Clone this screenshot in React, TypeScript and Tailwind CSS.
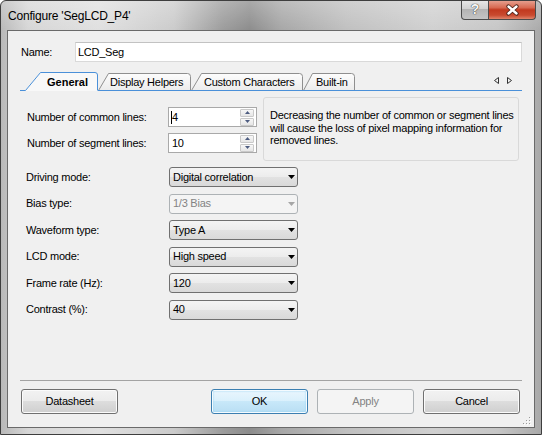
import React from "react";

const TAB_BLUE = "#4a90d9";

interface ITabProps {
  label: string;
  width: number;
  slant: number;
  idx: number;
  className: string;
  textClass: string;
}

// unselected tab with the slanted left edge
const Tab = ({ label, width, slant, idx, className, textClass }: ITabProps) => {
  const r = width - 0.5;
  const outline = `M0.5 18.5L${slant + 0.5} 1.5H${r - 3}Q${r} 1.5 ${r} 4.5V18.5`;
  const fill = `M0.5 19L${slant + 0.5} 1.5H${r - 3}Q${r} 1.5 ${r} 4.5V19Z`;
  return (
    <div className={className}>
      <svg className="absolute inset-0" width={width} height={19}>
        <defs>
          <linearGradient id={`tabfill${idx}`} x1="0" y1="0" x2="0" y2="1">
            <stop offset="0" stopColor="#fdfdfd" />
            <stop offset="1" stopColor="#ebebeb" />
          </linearGradient>
        </defs>
        <path d={fill} fill={`url(#tabfill${idx})`} />
        <path d={outline} fill="none" stroke="#8f8f8f" />
        <path d={`M0 18.5H${width}`} stroke={TAB_BLUE} />
      </svg>
      <span className={textClass}>{label}</span>
    </div>
  );
};

const SpinButton = ({ up }: { up?: boolean }) => (
  <div className="h-[8px] flex items-center justify-center border border-[#c9c9c9] rounded-[1px] bg-[linear-gradient(180deg,#f7f7f7_0%,#e6e6e6_100%)]">
    <svg width="5" height="3">
      <path d={up ? "M0 3L2.5 0L5 3Z" : "M0 0H5L2.5 3Z"} fill="#4d5c80" />
    </svg>
  </div>
);

const SpinBox = ({ value, caret }: { value: string; caret?: boolean }) => (
  <div className="w-[89px] h-[20px] flex items-center bg-white border border-[#a9a9a9]">
    <div className="flex-1 flex items-center pl-[2px]">
      {caret && <span className="w-px h-[13px] bg-black -mr-px" />}
      <span className="pl-px">{value}</span>
    </div>
    <div className="flex flex-col gap-px w-[14px] mr-[2px]">
      <SpinButton up />
      <SpinButton />
    </div>
  </div>
);

const Combo = ({ value, disabled }: { value: string; disabled?: boolean }) => (
  <div
    className={
      disabled
        ? "w-[129px] h-[20px] flex items-center rounded-[3px] border border-[#adb2b5] bg-[#f4f4f4] text-[#838383] pl-[3px] pr-[2px]"
        : "w-[129px] h-[20px] flex items-center rounded-[3px] border border-[#707070] bg-[linear-gradient(180deg,#f4f4f4_0%,#ececec_50%,#e2e2e2_50%,#d9d9d9_100%)] pl-[3px] pr-[2px]"
    }
  >
    <span className="flex-1">{value}</span>
    <svg width="7" height="4">
      <path d="M0 0H7L3.5 4Z" fill={disabled ? "#a6a6a6" : "#000"} />
    </svg>
  </div>
);

const Row = ({ label, children }: { label: string; children: React.ReactNode }) => (
  <div className="flex items-center">
    <span className="w-[143px]">{label}</span>
    {children}
  </div>
);

const Btn = ({ label, kind, className }: { label: string; kind?: "default" | "disabled"; className?: string }) => {
  let look =
    "border-[#707070] bg-[linear-gradient(180deg,#f2f2f2_0%,#ebebeb_50%,#dddddd_50%,#cfcfcf_100%)] shadow-[inset_0_0_0_1px_#fbfbfb]";
  if (kind === "default")
    look =
      "border-[#3c7fb1] bg-[linear-gradient(180deg,#eaf6fd_0%,#d9f0fc_50%,#c8e8f9_50%,#b8def3_100%)] shadow-[inset_0_0_0_1px_#f4fbff,inset_0_0_2px_1px_#8fd0f2]";
  if (kind === "disabled") look = "border-[#adb2b5] bg-[#f4f4f4] text-[#838383]";
  return (
    <div className={`w-[97px] h-[25px] flex items-center justify-center rounded-[3px] border ${look} ${className ?? ""}`}>
      {label}
    </div>
  );
};

export default function App() {
  return (
    <div className="w-[542px] h-[435px] font-['Liberation_Sans',Arial,sans-serif] text-[11px] leading-[13px] tracking-[-0.25px] text-black">
      <div className="w-full h-full flex flex-col border border-[#3e3e3e] rounded-t-[6px] overflow-hidden bg-[linear-gradient(180deg,rgba(255,255,255,0.25)_0px,rgba(255,255,255,0)_30px),linear-gradient(90deg,#b9b9b9_0%,#d6d6d6_5%,#e0e0e0_18%,#cbcbcb_32%,#9c9c9c_41%,#8c8c8c_46%,#a7a7a7_52%,#c0c0c0_64%,#d0d0d0_80%,#c6c6c6_92%,#a9a9a9_100%)]">
        {/* title bar */}
        <div className="h-[29px] shrink-0 flex items-start">
          <div className="pl-[7px] pt-[8px] text-[12px] leading-[14px] tracking-[-0.2px]">Configure 'SegLCD_P4'</div>
          <div className="ml-auto mr-[5px] -mt-px flex">
            <div className="w-[28px] h-[20px] flex items-center justify-center border border-t-0 border-[#4b4b4b] rounded-bl-[4px] bg-[linear-gradient(180deg,#e9e9e9_0%,#d2d2d2_45%,#b4b4b4_50%,#c4c4c4_100%)] text-[14px] font-bold text-[#f6f6f6] tracking-normal [text-shadow:0_0_1px_#333,0_0_1px_#333]">
              ?
            </div>
            <div className="w-[47px] h-[20px] flex items-center justify-center border border-t-0 border-l-0 border-[#4b4b4b] rounded-br-[4px] bg-[linear-gradient(180deg,#e8a696_0%,#d86a52_40%,#c2391f_52%,#c94a2f_80%,#e0846a_100%)]">
              <svg width="15" height="12">
                <path d="M3.5 2.5L11.5 9.5M11.5 2.5L3.5 9.5" stroke="#4a2219" strokeWidth="4.2" strokeLinecap="round" />
                <path d="M3.5 2.5L11.5 9.5M11.5 2.5L3.5 9.5" stroke="#ffffff" strokeWidth="2.4" strokeLinecap="round" />
              </svg>
            </div>
          </div>
        </div>

        {/* client area */}
        <div className="relative flex-1 mx-[6px] mb-[6px] border border-[#6a6a6a] bg-[#f0f0f0] flex flex-col">
          <div className="flex items-center mt-[11px] ml-[13px]">
            <span className="w-[54px]">Name:</span>
            <div className="w-[447px] h-[20px] flex items-center pl-[2px] bg-white border border-[#d9d9d9] border-t-[#c2c2c2]">
              LCD_Seg
            </div>
          </div>

          {/* tabs */}
          <div className="flex items-end h-[19px] w-[502px] mt-[10px] ml-[12px]">
            <div className="relative w-[78px] h-[19px] shrink-0">
              <svg className="absolute inset-0" width={78} height={19}>
                <path d="M5 19L20 0.5H75Q77.5 0.5 77.5 3V19Z" fill="#f8f8f8" />
                <path d="M0 18.5H5.5L20.5 0.5H75Q77.5 0.5 77.5 3V18.5" fill="none" stroke={TAB_BLUE} />
              </svg>
              <span className="relative block pl-[27px] pt-[4px] font-bold tracking-normal">General</span>
            </div>
            <Tab
              label="Display Helpers"
              width={93}
              slant={10}
              idx={1}
              className="relative w-[93px] h-[19px] shrink-0"
              textClass="relative block pl-[12px] pt-[4px]"
            />
            <Tab
              label="Custom Characters"
              width={112}
              slant={10}
              idx={2}
              className="relative w-[112px] h-[19px] shrink-0"
              textClass="relative block pl-[13px] pt-[4px]"
            />
            <Tab
              label="Built-in"
              width={52}
              slant={9}
              idx={3}
              className="relative w-[52px] h-[19px] shrink-0"
              textClass="relative block pl-[13px] pt-[4px]"
            />
            <div className="flex-1 h-[19px] border-b border-[#4a90d9] flex items-center justify-end gap-[8px] pr-[10px] pb-[2px]">
              <svg width="5" height="7">
                <path d="M4.5 0.5V6.5L0.5 3.5Z" fill="none" stroke="#333" />
              </svg>
              <svg width="5" height="7">
                <path d="M0.5 0.5V6.5L4.5 3.5Z" fill="none" stroke="#333" />
              </svg>
            </div>
          </div>

          {/* line counts + note */}
          <div className="flex mt-[6px] ml-[19px]">
            <div className="flex flex-col gap-[6px] pt-[10px]">
              <div className="flex items-center">
                <span className="w-[141px]">Number of common lines:</span>
                <SpinBox value="4" caret />
              </div>
              <div className="flex items-center">
                <span className="w-[141px]">Number of segment lines:</span>
                <SpinBox value="10" />
              </div>
            </div>
            <div className="ml-[6px] w-[256px] h-[64px] border border-[#d9d9d9] rounded-[3px] pl-[6px] pt-[11px] leading-[12.5px] whitespace-nowrap">
              Decreasing the number of common or segment lines
              <br />
              will cause the loss of pixel mapping information for
              <br />
              removed lines.
            </div>
          </div>

          {/* combos */}
          <div className="flex flex-col gap-[6.6px] mt-[6px] ml-[18px]">
            <Row label="Driving mode:">
              <Combo value="Digital correlation" />
            </Row>
            <Row label="Bias type:">
              <Combo value="1/3 Bias" disabled />
            </Row>
            <Row label="Waveform type:">
              <Combo value="Type A" />
            </Row>
            <Row label="LCD mode:">
              <Combo value="High speed" />
            </Row>
            <Row label="Frame rate (Hz):">
              <Combo value="120" />
            </Row>
            <Row label="Contrast (%):">
              <Combo value="40" />
            </Row>
          </div>

          <div className="mt-auto mx-[12px] h-px bg-[#a3a3a3]" />
          <div className="flex mt-[8px] mb-[13px] ml-[13px]">
            <Btn label="Datasheet" />
            <Btn label="OK" kind="default" className="ml-[93px]" />
            <Btn label="Apply" kind="disabled" className="ml-[9px]" />
            <Btn label="Cancel" className="ml-[9px]" />
          </div>

          {/* size grip */}
          <svg className="absolute right-[2px] bottom-[1px]" width="10" height="10">
            {[
              [7, 7],
              [7, 4],
              [7, 1],
              [4, 7],
              [4, 4],
              [1, 7],
            ].map(([x, y]) => (
              <g key={`${x}-${y}`}>
                <rect x={x + 1} y={y + 1} width="1" height="1" fill="#ffffff" />
                <rect x={x} y={y} width="1" height="1" fill="#9a9a9a" />
              </g>
            ))}
          </svg>
        </div>
      </div>
    </div>
  );
}
